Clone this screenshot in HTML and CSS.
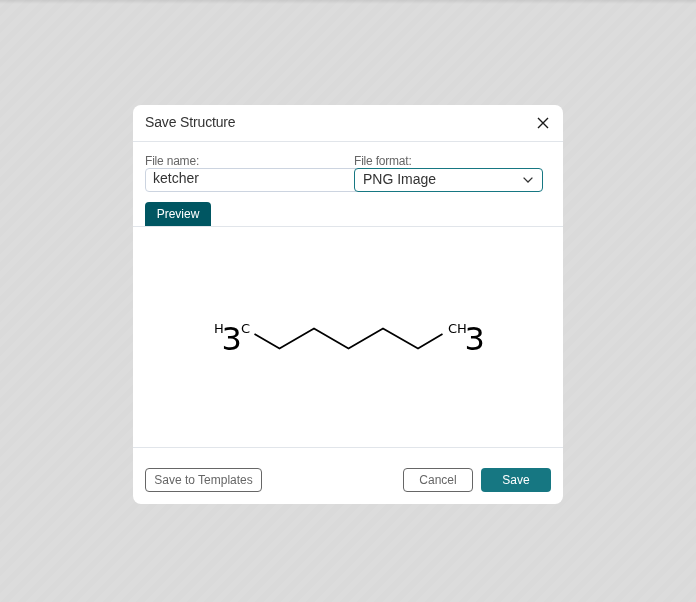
FILE: index.html
```html
<!DOCTYPE html>
<html lang="en">
<head>
  <meta charset="UTF-8">
  <title>Save Structure</title>
  <link rel="stylesheet" href="styles.css">
</head>
<body>
  <div class="overlay">
    <div class="dialog">
      <div class="dialog-header">
        <span class="dialog-title">Save Structure</span>
        <button class="close-btn" aria-label="Close">
          <svg width="12" height="12" viewBox="0 0 12 12">
            <path d="M1 1L11 11M11 1L1 11" stroke="#1a1a1a" stroke-width="1.4" fill="none"/>
          </svg>
        </button>
      </div>

      <div class="form-row">
        <div class="field field-name">
          <label class="field-label">File name:</label>
          <div class="text-input">ketcher</div>
        </div>
        <div class="field field-format">
          <label class="field-label">File format:</label>
          <div class="select-input">
            <span>PNG Image</span>
            <svg width="10" height="6" viewBox="0 0 10 6">
              <path d="M0.6 0.6L5 5L9.4 0.6" stroke="#333" stroke-width="1.3" fill="none"/>
            </svg>
          </div>
        </div>
      </div>

      <div class="tabs">
        <div class="tab">Preview</div>
      </div>

      <div class="preview">
        <svg class="molecule" width="430" height="220" viewBox="0 0 430 220">
          <polyline points="121.5,107 146.5,121.5 181,101.5 215.5,121.5 250,101.5 285,121.5 309.5,107" fill="none" stroke="#000" stroke-width="1.8"/>
          <text class="atom-small" x="81" y="106">H</text>
          <text class="atom-big" x="88.5" y="122.5">3</text>
          <text class="atom-small" x="108" y="106">C</text>
          <text class="atom-small" x="315" y="106">CH</text>
          <text class="atom-big" x="331.5" y="122.5">3</text>
        </svg>
      </div>

      <div class="dialog-footer">
        <button class="btn btn-outline">Save to Templates</button>
        <div class="footer-right">
          <button class="btn btn-outline btn-cancel">Cancel</button>
          <button class="btn btn-primary">Save</button>
        </div>
      </div>
    </div>
  </div>
</body>
</html>
```

FILE: styles.css
```css
* {
  box-sizing: border-box;
}
html, body {
  height: 100%;
}
body {
  margin: 0;
  font-family: 'Liberation Sans', Arial, sans-serif;
  background-color: #dbdbdb;
}
.overlay {
  height: 100%;
  display: flex;
  justify-content: center;
  align-items: flex-start;
  padding-top: 105px;
  background-image:
    linear-gradient(to bottom, rgba(0,0,0,0.08), rgba(0,0,0,0) 4px),
    repeating-linear-gradient(-45deg, #dcdcdc 0, #dcdcdc 6px, #dadada 6px, #dadada 12px);
}
.dialog {
  width: 430px;
  height: 399px;
  background-color: #fff;
  border-radius: 8px;
  display: flex;
  flex-direction: column;
  will-change: transform;
}
.dialog-header {
  height: 37px;
  flex: none;
  display: flex;
  align-items: center;
  justify-content: space-between;
  padding: 0 14px 2px 12px;
  border-bottom: 1px solid #e1e5ea;
}
.dialog-title {
  font-size: 14px;
  letter-spacing: -0.15px;
  color: #333;
}
.close-btn {
  border: none;
  background: none;
  padding: 0;
  display: flex;
  margin-top: 1px;
}
.form-row {
  display: flex;
  padding: 12px 20px 0 12px;
}
.field {
  display: flex;
  flex-direction: column;
}
.field-name {
  width: 209px;
  flex: none;
}
.field-format {
  flex: 1;
}
.field-label {
  font-size: 12px;
  line-height: 14px;
  letter-spacing: -0.2px;
  color: #666;
}
.text-input {
  height: 24px;
  width: 215px;
  border: 1px solid #ccd4e0;
  border-radius: 4px;
  padding-left: 7px;
  font-size: 14px;
  line-height: 19px;
  color: #333;
}
.select-input {
  position: relative;
  height: 24px;
  border: 1px solid #167782;
  border-radius: 4px;
  background-color: #fff;
  display: flex;
  align-items: center;
  justify-content: space-between;
  padding: 0 9px 0 8px;
  font-size: 14px;
  color: #333;
}
.select-input span {
  margin-top: -2px;
}
.tabs {
  display: flex;
  padding: 10px 12px 0;
  flex: none;
}
.tab {
  width: 66px;
  height: 24px;
  background-color: #005662;
  color: #fff;
  border-radius: 4px 4px 0 0;
  font-size: 12px;
  line-height: 24px;
  text-align: center;
}
.preview {
  height: 222px;
  flex: none;
  border-top: 1px solid #e1e5ea;
  border-bottom: 1px solid #e1e5ea;
}
.molecule {
  display: block;
}
.atom-small {
  font-family: 'DejaVu Sans', sans-serif;
  font-size: 13px;
  fill: #000;
}
.atom-big {
  font-family: 'DejaVu Sans', sans-serif;
  font-size: 32px;
  fill: #000;
}
.dialog-footer {
  flex: 1;
  display: flex;
  justify-content: space-between;
  padding: 20px 12px 0;
}
.footer-right {
  display: flex;
  gap: 8px;
}
.btn {
  height: 24px;
  border-radius: 4px;
  font-family: 'Liberation Sans', Arial, sans-serif;
  font-size: 12px;
  padding: 0;
  cursor: pointer;
}
.btn-outline {
  width: 117px;
  background-color: #fff;
  border: 1px solid #666;
  color: #666;
}
.btn-cancel {
  width: 70px;
}
.btn-primary {
  width: 70px;
  background-color: #167782;
  border: none;
  color: #fff;
}
```
